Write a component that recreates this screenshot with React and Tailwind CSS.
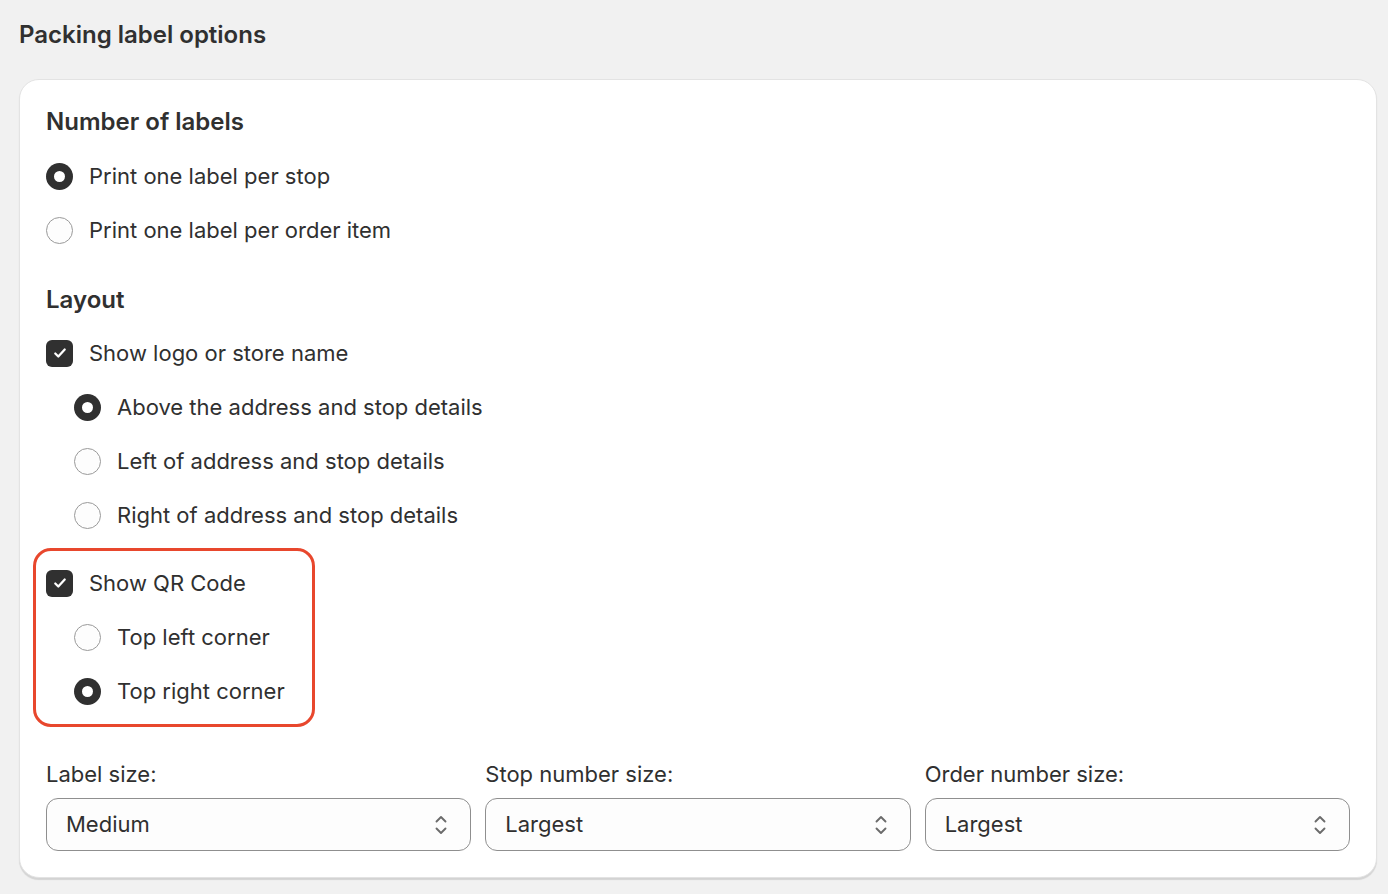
import React from 'react';

function Radio({ checked }) {
  if (checked) {
    return (
      <span className="w-[27px] h-[27px] rounded-full bg-[#303030] flex items-center justify-center shrink-0">
        <span className="w-[11px] h-[11px] rounded-full bg-white"></span>
      </span>
    );
  }
  return <span className="w-[27px] h-[27px] rounded-full border border-[#9a9a9a] bg-[#fdfdfd] shrink-0"></span>;
}

function Checkbox() {
  return (
    <span className="w-[27px] h-[27px] rounded-[6px] bg-[#303030] flex items-center justify-center shrink-0">
      <svg width="18" height="18" viewBox="0 0 16 16" fill="none">
        <path d="M3.8 8.4l2.7 2.7 5.7-6.2" stroke="white" strokeWidth="2" strokeLinecap="round" strokeLinejoin="round" />
      </svg>
    </span>
  );
}

function Row({ children, label, indent }) {
  return (
    <div className={`h-[54px] flex items-center gap-[16px] ${indent ? 'pl-[28px]' : ''}`}>
      {children}
      <span className="text-[22px] text-[#303030]">{label}</span>
    </div>
  );
}

function Select({ label, value }) {
  return (
    <div>
      <div className="h-[28px] flex items-center text-[22px] text-[#303030]">{label}</div>
      <div className="mt-[10px] h-[53px] rounded-[12px] border border-[#8f8f8f] bg-[#fdfdfd] flex items-center justify-between pl-[19px] pr-[21px]">
        <span className="text-[22px] text-[#303030]">{value}</span>
        <svg width="16" height="26" viewBox="0 0 16 26" fill="none">
          <path d="M3.5 9.5l4.5-4.5 4.5 4.5M3.5 16.5l4.5 4.5 4.5-4.5" stroke="#6b6b6b" strokeWidth="1.9" strokeLinecap="round" strokeLinejoin="round" />
        </svg>
      </div>
    </div>
  );
}

export default function App() {
  return (
    <div className="min-h-[894px] bg-[#f1f1f1] pt-[20px] pb-[14px]" style={{ fontFamily: 'Inter, "Noto Sans", sans-serif' }}>
      <h2 className="ml-[19px] h-[30px] flex items-center text-[24px] font-semibold text-[#303030]">Packing label options</h2>

      <div className="mt-[29px] ml-[19px] mr-[11px] rounded-[20px] bg-white border border-[#e3e3e3] shadow-[0_2px_1px_rgba(0,0,0,0.12)] px-[26px] pt-[27px] pb-[26px]">
        <h3 className="h-[30px] flex items-center text-[24px] font-semibold text-[#303030]">Number of labels</h3>
        <div className="mt-[12px]">
          <Row label="Print one label per stop"><Radio checked /></Row>
          <Row label="Print one label per order item"><Radio /></Row>
        </div>

        <h3 className="mt-[28px] h-[30px] flex items-center text-[24px] font-semibold text-[#303030]">Layout</h3>
        <div className="mt-[11px]">
          <Row label="Show logo or store name"><Checkbox /></Row>
          <Row label="Above the address and stop details" indent><Radio checked /></Row>
          <Row label="Left of address and stop details" indent><Radio /></Row>
          <Row label="Right of address and stop details" indent><Radio /></Row>
        </div>

        <div className="mt-[6px] -ml-[13px] w-[282px] rounded-[18px] border-[3px] border-[#e8472d] pl-[10px] pt-[5px] pb-[6px]">
          <Row label="Show QR Code"><Checkbox /></Row>
          <Row label="Top left corner" indent><Radio /></Row>
          <Row label="Top right corner" indent><Radio checked /></Row>
        </div>

        <div className="mt-[33px] grid grid-cols-3 gap-[14px]">
          <Select label="Label size:" value="Medium" />
          <Select label="Stop number size:" value="Largest" />
          <Select label="Order number size:" value="Largest" />
        </div>
      </div>
    </div>
  );
}
